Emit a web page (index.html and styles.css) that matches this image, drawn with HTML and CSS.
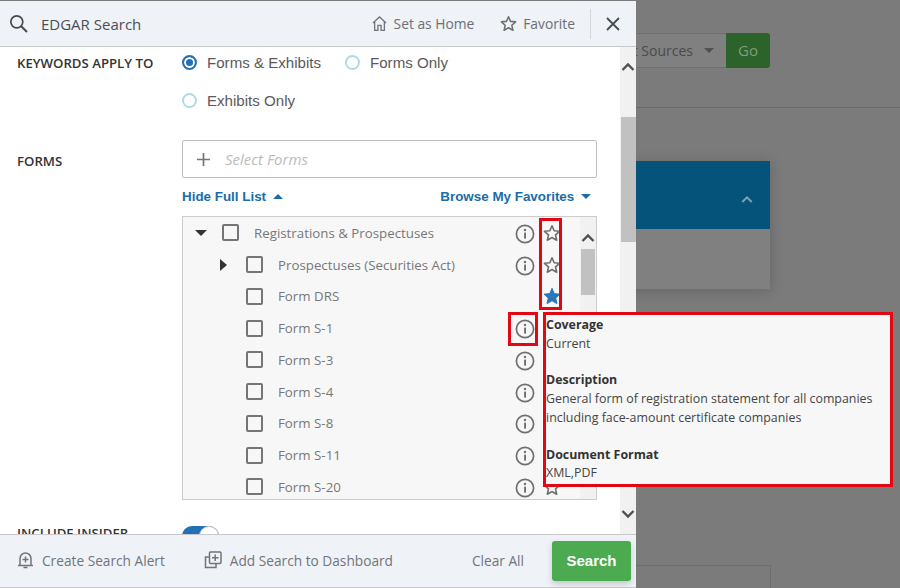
FILE: index.html
```html
<!DOCTYPE html>
<html lang="en">
<head>
    <meta charset="UTF-8">
    <title>EDGAR Search</title>
    <link rel="stylesheet" href="styles.css">
</head>
<body>
    <svg class="sprite" width="0" height="0">
        <symbol id="i-info" viewBox="0 0 20 20">
            <circle cx="10" cy="10" r="8.6" fill="none" stroke="#6f6f6f" stroke-width="1.7"/>
            <rect x="9.1" y="8.6" width="1.9" height="6" fill="#6f6f6f"/>
            <circle cx="10" cy="6" r="1.2" fill="#6f6f6f"/>
        </symbol>
        <symbol id="i-star" viewBox="0 0 20 20">
            <polygon points="10,2 12.4,7.5 18.4,8.1 13.9,12.1 15.2,18 10,15 4.800,18 6.100,12.1 1.600,8.100 7.600,7.500" fill="none" stroke="#6f6f6f" stroke-width="1.800" stroke-linejoin="round"/>
        </symbol>
        <symbol id="i-star-on" viewBox="0 0 20 20">
            <polygon points="10,1.500 12.600,7.300 18.900,8 14.200,12.200 15.500,18.500 10,15.300 4.500,18.500 5.800,12.200 1.100,8 7.400,7.300" fill="#2b75b9" stroke="#2b75b9" stroke-width="1" stroke-linejoin="round"/>
        </symbol>
        <symbol id="i-arrow-up" viewBox="0 0 14 10">
            <path d="M1.500 8 7 2.500 12.500 8" fill="none" stroke="#505050" stroke-width="2.400"/>
        </symbol>
        <symbol id="i-arrow-down" viewBox="0 0 14 10">
            <path d="M1.500 2 7 7.500 12.500 2" fill="none" stroke="#505050" stroke-width="2.400"/>
        </symbol>
    </svg>

    <div class="page">
        <div class="backdrop">
            <div class="back-top">
                <div class="back-select">Select Sources <span class="back-caret"></span></div>
                <div class="back-go">Go</div>
            </div>
            <div class="back-card">
                <div class="back-card-head">
                    <svg width="12" height="9" viewBox="0 0 14 10"><path d="M1.500 8 7 2.500 12.500 8" fill="none" stroke="#7ea0b4" stroke-width="2.400"/></svg>
                </div>
            </div>
            <div class="back-box"></div>
        </div>

        <div class="panel">
            <header class="panel-head">
                <svg class="search-icon" width="20" height="20" viewBox="0 0 20 20">
                    <circle cx="7.800" cy="7.800" r="6" fill="none" stroke="#444b52" stroke-width="1.700"/>
                    <path d="M12.200 12.200 18 18" stroke="#444b52" stroke-width="2"/>
                </svg>
                <span class="panel-title">EDGAR Search</span>
                <span class="head-action">
                    <svg width="15" height="17" viewBox="0 0 16 17">
                        <path d="M1 8 8 1.500 15 8M2.800 7v8.800h3.500v-5.300h3.400v5.300h3.500V7" fill="none" stroke="#6f757b" stroke-width="1.400"/>
                    </svg>
                    Set as Home
                </span>
                <span class="head-action head-fav">
                    <svg width="17" height="17" viewBox="0 0 20 20"><use href="#i-star"/></svg>
                    Favorite
                </span>
                <span class="head-divider"></span>
                <svg class="close-icon" width="14" height="14" viewBox="0 0 14 14">
                    <path d="M1 1 13 13M13 1 1 13" stroke="#444b52" stroke-width="1.800"/>
                </svg>
            </header>

            <div class="panel-body">
                <div class="panel-scroll">
                    <div class="field">
                        <div class="field-label">KEYWORDS APPLY TO</div>
                        <div class="radios">
                            <label class="radio radio-wide"><span class="dot dot-on"></span>Forms &amp; Exhibits</label>
                            <label class="radio"><span class="dot"></span>Forms Only</label>
                            <label class="radio radio-wide"><span class="dot"></span>Exhibits Only</label>
                        </div>
                    </div>

                    <div class="field field-forms">
                        <div class="field-label forms-label">FORMS</div>
                        <div class="field-main">
                            <div class="select-box">
                                <svg width="15" height="15" viewBox="0 0 15 15"><path d="M7.500 1v13M1 7.500h13" stroke="#757575" stroke-width="1.700"/></svg>
                                <span>Select Forms</span>
                            </div>
                            <div class="list-links">
                                <a>Hide Full List <span class="caret-up"></span></a>
                                <a>Browse My Favorites <span class="caret-down"></span></a>
                            </div>
                            <div class="form-list">
                                <div class="rows">
                                    <div class="row"><span class="tree-open"></span><span class="check"></span><span class="row-name">Registrations &amp; Prospectuses</span><svg class="info" width="20" height="20"><use href="#i-info"/></svg><svg class="star" viewBox="0 0 20 20"><use href="#i-star"/></svg></div>
                                    <div class="row row-sub"><span class="tree-closed"></span><span class="check"></span><span class="row-name">Prospectuses (Securities Act)</span><svg class="info" width="20" height="20"><use href="#i-info"/></svg><svg class="star" viewBox="0 0 20 20"><use href="#i-star"/></svg></div>
                                    <div class="row row-sub"><span class="tree-none"></span><span class="check"></span><span class="row-name">Form DRS</span><svg class="star" viewBox="0 0 20 20"><use href="#i-star-on"/></svg></div>
                                    <div class="row row-sub"><span class="tree-none"></span><span class="check"></span><span class="row-name">Form S-1</span><svg class="info" width="20" height="20"><use href="#i-info"/></svg><svg class="star" viewBox="0 0 20 20"><use href="#i-star"/></svg></div>
                                    <div class="row row-sub"><span class="tree-none"></span><span class="check"></span><span class="row-name">Form S-3</span><svg class="info" width="20" height="20"><use href="#i-info"/></svg><svg class="star" viewBox="0 0 20 20"><use href="#i-star"/></svg></div>
                                    <div class="row row-sub"><span class="tree-none"></span><span class="check"></span><span class="row-name">Form S-4</span><svg class="info" width="20" height="20"><use href="#i-info"/></svg><svg class="star" viewBox="0 0 20 20"><use href="#i-star"/></svg></div>
                                    <div class="row row-sub"><span class="tree-none"></span><span class="check"></span><span class="row-name">Form S-8</span><svg class="info" width="20" height="20"><use href="#i-info"/></svg><svg class="star" viewBox="0 0 20 20"><use href="#i-star"/></svg></div>
                                    <div class="row row-sub"><span class="tree-none"></span><span class="check"></span><span class="row-name">Form S-11</span><svg class="info" width="20" height="20"><use href="#i-info"/></svg><svg class="star" viewBox="0 0 20 20"><use href="#i-star"/></svg></div>
                                    <div class="row row-sub"><span class="tree-none"></span><span class="check"></span><span class="row-name">Form S-20</span><svg class="info" width="20" height="20"><use href="#i-info"/></svg><svg class="star" viewBox="0 0 20 20"><use href="#i-star"/></svg></div>
                                </div>
                                <div class="scrollbar list-scrollbar">
                                    <svg width="14" height="10"><use href="#i-arrow-up"/></svg>
                                    <div class="thumb"></div>
                                </div>
                            </div>
                        </div>
                    </div>

                    <div class="field field-insider">
                        <div class="field-label insider-label">INCLUDE INSIDER</div>
                        <div class="toggle"><span class="toggle-knob"></span></div>
                    </div>
                </div>
                <div class="scrollbar body-scrollbar">
                    <svg width="14" height="10"><use href="#i-arrow-up"/></svg>
                    <div class="thumb"></div>
                    <svg class="arrow-end" width="14" height="10"><use href="#i-arrow-down"/></svg>
                </div>
            </div>

            <footer class="panel-foot">
                <span class="foot-action">
                    <svg width="17" height="18" viewBox="0 0 17 18">
                        <path d="M1 14.500h15M3 14.500V7.500a5.500 5.500 0 0 1 11 0v7M6.500 16.500h4" fill="none" stroke="#6f757b" stroke-width="1.500"/>
                        <path d="M8.500 5.500v6M5.500 8.500h6" stroke="#6f757b" stroke-width="1.500"/>
                    </svg>
                    Create Search Alert
                </span>
                <span class="foot-action foot-add">
                    <svg width="18" height="18" viewBox="0 0 18 18">
                        <path d="M5 6H1.500v10.500H12V13" fill="none" stroke="#6f757b" stroke-width="1.500"/>
                        <rect x="5.500" y="1" width="11.500" height="11.500" rx="1" fill="none" stroke="#6f757b" stroke-width="1.500"/>
                        <path d="M11.200 3.500v6.500M8 6.700h6.500" stroke="#6f757b" stroke-width="1.500"/>
                    </svg>
                    Add Search to Dashboard
                </span>
                <span class="clear-all">Clear All</span>
                <button class="search-btn">Search</button>
            </footer>

            <!-- annotation boxes sit over the list -->
            <div class="mark mark-stars"></div>
            <div class="mark mark-info"></div>
            <div class="tooltip">
                <div class="tip-title">Coverage</div>
                <div>Current</div>
                <div class="tip-title tip-gap">Description</div>
                <div>General form of registration statement for all companies including face-amount certificate companies</div>
                <div class="tip-title tip-gap">Document Format</div>
                <div>XML,PDF</div>
            </div>
        </div>
    </div>
</body>
</html>
```

FILE: styles.css
```css
html, body {
    margin: 0;
    padding: 0;
}
body {
    width: 900px;
    height: 588px;
    overflow: hidden;
    font-family: "Open Sans", sans-serif;
}
.sprite {
    position: absolute;
}
.page {
    position: relative;
    width: 900px;
    height: 588px;
    overflow: hidden;
    background: #7b7b7b;
}

/* greyed page behind the drawer */
.back-top {
    display: flex;
    justify-content: flex-end;
    align-items: flex-start;
    box-sizing: border-box;
    height: 108px;
    padding: 33px 130px 0 0;
    border-bottom: 1px solid #6b6b6b;
}
.back-select {
    display: flex;
    align-items: center;
    gap: 11px;
    box-sizing: border-box;
    height: 35px;
    padding-right: 12px;
    background: #808080;
    border-top: 1px solid #707070;
    border-bottom: 1px solid #707070;
    color: #4a4a4a;
    font-size: 14px;
}
.back-caret {
    width: 0;
    height: 0;
    border-left: 5px solid transparent;
    border-right: 5px solid transparent;
    border-top: 5px solid #4f4f4f;
}
.back-go {
    width: 44px;
    height: 35px;
    line-height: 35px;
    text-align: center;
    background: #2b632b;
    border-radius: 0 3px 3px 0;
    color: #7f9c7f;
    font-size: 15px;
}
.back-card {
    width: 270px;
    height: 128px;
    margin: 53px 0 0 500px;
    background: #808080;
    box-shadow: 0 2px 14px rgba(0, 0, 0, 0.18);
}
.back-card-head {
    display: flex;
    justify-content: flex-end;
    align-items: center;
    box-sizing: border-box;
    height: 68px;
    padding: 8px 17px 0 0;
    background: #05537a;
}
.back-box {
    width: 270px;
    height: 40px;
    margin: 276px 0 0 501px;
    box-sizing: border-box;
    border: 1px solid #6e6e6e;
}

/* drawer */
.panel {
    position: absolute;
    top: 1px;
    left: 0;
    display: flex;
    flex-direction: column;
    width: 636px;
    height: 587px;
    background: #fff;
    color: #555;
}
.panel-head {
    display: flex;
    align-items: center;
    flex: none;
    box-sizing: border-box;
    height: 46px;
    padding: 0 16px 0 9px;
    background: #eff2f7;
    border-bottom: 1px solid #c9c9c9;
}
.panel-title {
    flex: 1;
    margin-left: 12px;
    color: #4a4f55;
    font-size: 15px;
    font-weight: 500;
}
.head-action {
    display: flex;
    align-items: center;
    gap: 7px;
    color: #6a6f75;
    font-size: 13.8px;
}
.head-fav {
    gap: 6px;
    margin-left: 26px;
}
.head-divider {
    width: 1px;
    height: 30px;
    margin: 0 15px;
    background: #d5d7da;
}
.panel-body {
    position: relative;
    display: flex;
    flex: 1;
    min-height: 0;
    overflow: hidden;
}
.panel-scroll {
    flex: 1;
    padding: 0 23px 0 17px;
}
.field {
    display: flex;
}
.field-label {
    flex: none;
    width: 165px;
    color: #333;
    font-size: 13.2px;
    font-weight: 600;
    line-height: 32px;
}
.radios {
    display: flex;
    flex-wrap: wrap;
    flex: 1;
    row-gap: 7px;
}
.radio {
    display: flex;
    align-items: center;
    gap: 10px;
    height: 31px;
    color: #5a5a5a;
    font-family: "Liberation Sans", Arial, sans-serif;
    font-size: 15.1px;
}
.radio-wide {
    width: 163px;
}
.radio:nth-child(3) {
    width: 100%;
}
.dot {
    box-sizing: border-box;
    width: 15px;
    height: 15px;
    border: 2px solid #acdaea;
    border-radius: 50%;
}
.dot-on {
    border: 2px solid #2270b5;
    background: #2270b5;
    box-shadow: inset 0 0 0 2px #fff;
}
.field-forms {
    margin-top: 24px;
}
.forms-label {
    padding-top: 5px;
}
.field-main {
    flex: 1;
    min-width: 0;
}
.select-box {
    display: flex;
    align-items: center;
    gap: 14px;
    box-sizing: border-box;
    height: 38px;
    padding-left: 13px;
    border: 1px solid #bdbdbd;
    border-radius: 2px;
    color: #bbb;
    font-size: 15px;
    font-style: italic;
}
.list-links {
    display: flex;
    justify-content: space-between;
    height: 19px;
    margin-top: 9px;
    padding-right: 6px;
    color: #1b6ca8;
    font-family: "Liberation Sans", Arial, sans-serif;
    font-size: 13.4px;
    font-weight: bold;
    line-height: 20px;
}
.caret-up, .caret-down {
    display: inline-block;
    width: 0;
    height: 0;
    margin: 0 0 2px 3px;
    border-left: 5px solid transparent;
    border-right: 5px solid transparent;
}
.caret-up {
    border-bottom: 5px solid #1b6ca8;
}
.caret-down {
    border-top: 5px solid #1b6ca8;
}
.form-list {
    display: flex;
    box-sizing: border-box;
    height: 284px;
    margin-top: 10px;
    overflow: hidden;
    background: #f7f7f7;
    border: 1px solid #ccc;
}
.rows {
    flex: 1;
    min-width: 0;
}
.row {
    display: flex;
    align-items: center;
    height: 31.75px;
    padding-left: 12px;
    color: #777;
    font-size: 13.3px;
}
.row-sub {
    padding-left: 37px;
}
.tree-open {
    width: 0;
    height: 0;
    margin-right: 15px;
    border-left: 6.500px solid transparent;
    border-right: 6.500px solid transparent;
    border-top: 6px solid #333;
}
.tree-closed {
    width: 0;
    height: 0;
    margin-right: 19px;
    border-top: 6.500px solid transparent;
    border-bottom: 6.500px solid transparent;
    border-left: 7px solid #333;
}
.tree-none {
    width: 26px;
}
.check {
    box-sizing: border-box;
    flex: none;
    width: 17px;
    height: 17px;
    margin-right: 15px;
    border: 2px solid #757575;
    border-radius: 2px;
}
.row-name {
    flex: 1;
}
.info {
    flex: none;
    margin: 2px 8px 0 0;
}
.star {
    flex: none;
    width: 18px;
    height: 18px;
    margin-right: 1px;
}
.scrollbar {
    display: flex;
    flex-direction: column;
    align-items: center;
    flex: none;
    background: #f1f1f1;
}
.thumb {
    background: #c1c1c1;
}
.list-scrollbar {
    width: 16px;
    margin-left: 18px;
    padding-top: 16px;
}
.list-scrollbar .thumb {
    width: 14px;
    height: 46px;
    margin-top: 6px;
}
.body-scrollbar {
    width: 16px;
    height: 100%;
    padding-top: 15px;
    box-sizing: border-box;
}
.body-scrollbar .thumb {
    width: 15px;
    height: 125px;
    margin-top: 45px;
}
.arrow-end {
    margin-top: auto;
    margin-bottom: 15px;
}
.field-insider {
    margin-top: 26px;
}
.insider-label {
    line-height: 14px;
}
.toggle {
    position: relative;
    width: 37px;
    height: 20px;
    border-radius: 10px;
    background: #2270b5;
}
.toggle-knob {
    position: absolute;
    top: 0;
    right: 0;
    box-sizing: border-box;
    width: 20px;
    height: 20px;
    background: #fff;
    border: 1px solid #ccc;
    border-radius: 50%;
}
.panel-foot {
    display: flex;
    align-items: center;
    flex: none;
    box-sizing: border-box;
    height: 54px;
    padding: 0 5px 0 17px;
    background: #eff2f7;
    border-top: 1px solid #c9c9c9;
    border-bottom: 1px solid #c9c9c9;
    color: #6f757b;
    font-size: 13.7px;
}
.foot-action {
    display: flex;
    align-items: center;
    gap: 8px;
    margin-bottom: 2px;
}
.foot-add {
    margin-left: 39px;
}
.clear-all {
    margin: 0 0 2px auto;
}
.search-btn {
    width: 79px;
    height: 40px;
    margin-left: 28px;
    padding: 0 0 2px;
    border: 0;
    border-radius: 3px;
    background: #4caa50;
    box-shadow: 0 3px 6px rgba(0, 0, 0, 0.18);
    color: #fff;
    font-family: "Liberation Sans", Arial, sans-serif;
    font-size: 15px;
    font-weight: bold;
}

/* red annotation boxes */
.mark {
    position: absolute;
    box-sizing: border-box;
    border: 3px solid #e30613;
}
.mark-stars {
    top: 217px;
    left: 539px;
    width: 23px;
    height: 92px;
}
.mark-info {
    top: 311px;
    left: 508px;
    width: 30px;
    height: 34px;
}
.tooltip {
    position: absolute;
    top: 311px;
    left: 543px;
    box-sizing: border-box;
    width: 350px;
    height: 175px;
    padding: 1px 14px 0 0;
    background: #f7f7f7;
    border: 3px solid #e30613;
    color: #444;
    font-size: 12.4px;
    line-height: 18.700px;
}
.tip-title {
    color: #333;
    font-weight: 700;
}
.tip-gap {
    margin-top: 18px;
}
```
